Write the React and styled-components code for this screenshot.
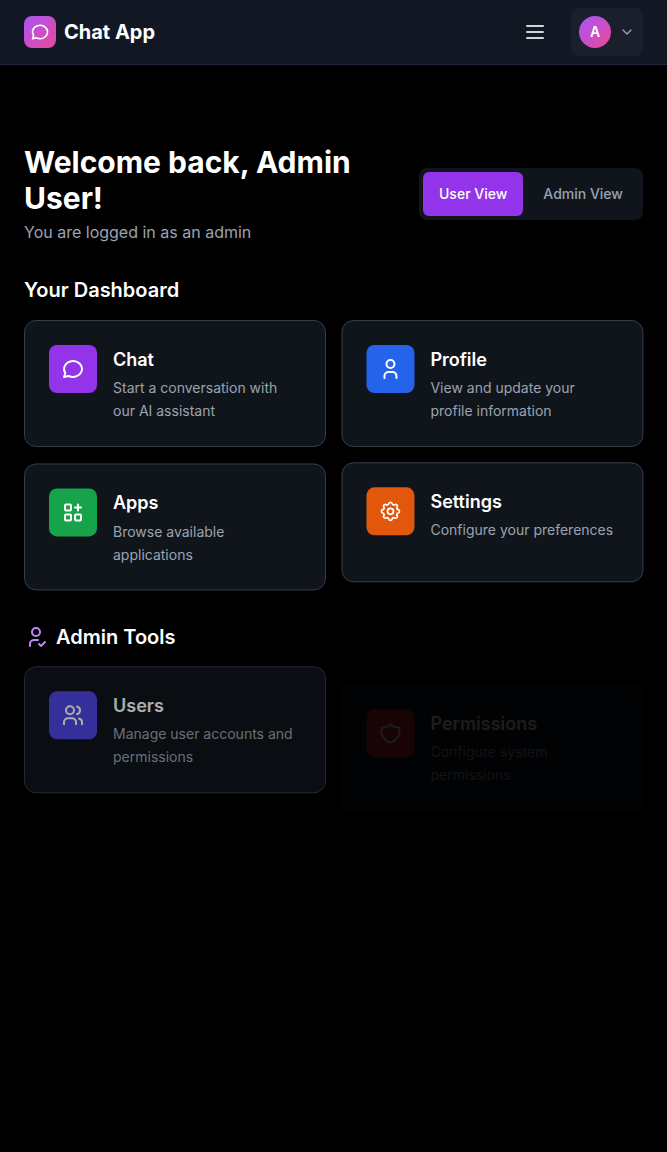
import React from 'react';
import styled, { createGlobalStyle } from 'styled-components';
import {
  TbMessageCircle, TbUser, TbApps, TbSettings, TbUserCheck, TbUsers, TbShield, TbMenu2, TbChevronDown,
} from 'react-icons/tb';

const GlobalStyle = createGlobalStyle`
  *, *::before, *::after { box-sizing: border-box; }
  body { margin: 0; background: #000; color: #fff; font-family: Inter, sans-serif; font-size: 16px; line-height: 24px; }
  h1, h2, h3, p { margin: 0; }
  button { font: inherit; border: 0; padding: 0; background: none; cursor: pointer; }
  svg { display: block; flex: none; }
`;

const Page = styled.div`
  min-height: 1152px;
  background: #000;
`;

const Header = styled.header`
  display: flex;
  align-items: center;
  justify-content: space-between;
  height: 65px;
  padding: 0 24px;
  background: #111824;
  border-bottom: 1px solid #1f2937;
`;

const Brand = styled.div`
  display: flex;
  align-items: center;
  gap: 8px;
  font-size: 20px;
  font-weight: 700;
  line-height: 28px;
`;

const Logo = styled.span`
  display: grid;
  place-items: center;
  width: 32px;
  height: 32px;
  border-radius: 8px;
  background: linear-gradient(to bottom right, #a855f7, #ec4899);
`;

const HeaderActions = styled.div`
  display: flex;
  align-items: center;
  gap: 24px;
`;

const MenuButton = styled.button`
  color: #d1d5db;
`;

const AccountButton = styled.button`
  display: flex;
  align-items: center;
  gap: 8px;
  height: 48px;
  padding: 8px;
  border-radius: 8px;
  background: #19202c;
  color: #9ca3af;
`;

const Avatar = styled.span`
  display: grid;
  place-items: center;
  width: 32px;
  height: 32px;
  border-radius: 50%;
  background: linear-gradient(to bottom right, #a855f7, #ec4899);
  color: #fff;
  font-size: 14px;
  font-weight: 600;
  line-height: 20px;
`;

const Main = styled.main`
  padding: 79px 24px 0;
`;

const Hero = styled.div`
  display: flex;
  align-items: center;
  justify-content: space-between;
  height: 100px;
`;

const Greeting = styled.h1`
  width: 360px;
  font-size: 30px;
  font-weight: 700;
  line-height: 36px;
`;

const Subtitle = styled.p`
  margin-top: 4px;
  color: #9ca3af;
`;

const ViewSwitch = styled.div`
  display: flex;
  flex: none;
  width: 224px;
  height: 52px;
  padding: 4px;
  border-radius: 8px;
  background: #10151c;
`;

const ViewTab = styled.button`
  padding: 0 16px;
  margin-right: ${({ $active }) => ($active ? '4px' : '0')};
  border-radius: 6px;
  background: ${({ $active }) => ($active ? '#9333ea' : 'transparent')};
  color: ${({ $active }) => ($active ? '#fff' : '#9ca3af')};
  font-size: 14px;
  font-weight: 500;
  line-height: 20px;
  white-space: nowrap;
`;

const SectionTitle = styled.h2`
  display: flex;
  align-items: center;
  gap: 8px;
  margin-top: 32px;
  margin-bottom: 16px;
  font-size: 20px;
  font-weight: 600;
  line-height: 28px;

  svg { color: #c084fc; }
`;

const CardGrid = styled.div`
  display: grid;
  grid-template-columns: 1fr 1fr;
  grid-auto-rows: 127.25px;
  gap: 16px;
  align-items: start;
`;

const CardBox = styled.article`
  display: flex;
  align-items: flex-start;
  gap: 16px;
  height: ${({ $height }) => $height || 127.25}px;
  padding: 24px;
  border: 1px solid #343e4d;
  border-radius: 12px;
  background: #10151c;
  opacity: ${({ $opacity }) => $opacity ?? 1};
  transform: translateY(${({ $shift }) => $shift || 0}px) scale(0.9999);

  &:nth-child(even) {
    transform: translate(-0.55px, ${({ $shift }) => $shift || 0}px) scale(0.9999);
  }
`;

const IconTile = styled.span`
  display: grid;
  place-items: center;
  flex: none;
  width: 48px;
  height: 48px;
  border-radius: 8px;
  background: ${({ $color }) => $color};
`;

const CardTitle = styled.h3`
  margin-bottom: ${({ $gap }) => $gap}px;
  font-size: 18px;
  font-weight: 600;
  line-height: 29px;
`;

const CardText = styled.p`
  color: #9ca3af;
  font-size: 14px;
  line-height: 23px;
`;

function Card({ icon: Icon, color, title, text, titleGap = 2, stroke = 2, ...box }) {
  return (
    <CardBox {...box}>
      <IconTile $color={color}><Icon size={24} strokeWidth={stroke} /></IconTile>
      <div>
        <CardTitle $gap={titleGap}>{title}</CardTitle>
        <CardText>{text}</CardText>
      </div>
    </CardBox>
  );
}

export default function App() {
  return (
    <Page>
      <GlobalStyle />
      <Header>
        <Brand>
          <Logo><TbMessageCircle size={20} /></Logo>
          Chat App
        </Brand>
        <HeaderActions>
          <MenuButton aria-label="Menu"><TbMenu2 size={24} /></MenuButton>
          <AccountButton aria-label="Account">
            <Avatar>A</Avatar>
            <TbChevronDown size={16} />
          </AccountButton>
        </HeaderActions>
      </Header>
      <Main>
        <Hero>
          <div>
            <Greeting>Welcome back, Admin User!</Greeting>
            <Subtitle>You are logged in as an admin</Subtitle>
          </div>
          <ViewSwitch>
            <ViewTab $active>User View</ViewTab>
            <ViewTab>Admin View</ViewTab>
          </ViewSwitch>
        </Hero>
        <SectionTitle>Your Dashboard</SectionTitle>
        <CardGrid>
          <Card icon={TbMessageCircle} color="#9333ea" title="Chat" text="Start a conversation with our AI assistant" />
          <Card icon={TbUser} color="#2563eb" title="Profile" text="View and update your profile information" />
          <Card icon={TbApps} color="#16a34a" title="Apps" text="Browse available applications" titleGap={3} $shift={0.45} />
          <Card icon={TbSettings} color="#e2570c" title="Settings" text="Configure your preferences" stroke={1.7} $height={119.5} $shift={-0.7} />
        </CardGrid>
        <SectionTitle><TbUserCheck size={24} />Admin Tools</SectionTitle>
        <CardGrid>
          <Card icon={TbUsers} color="#4f46e5" title="Users" text="Manage user accounts and permissions" $opacity={0.68} $shift={-0.7} />
          <Card icon={TbShield} color="#dc2626" title="Permissions" text="Configure system permissions" $opacity={0.11} $shift={17.45} />
        </CardGrid>
      </Main>
    </Page>
  );
}
